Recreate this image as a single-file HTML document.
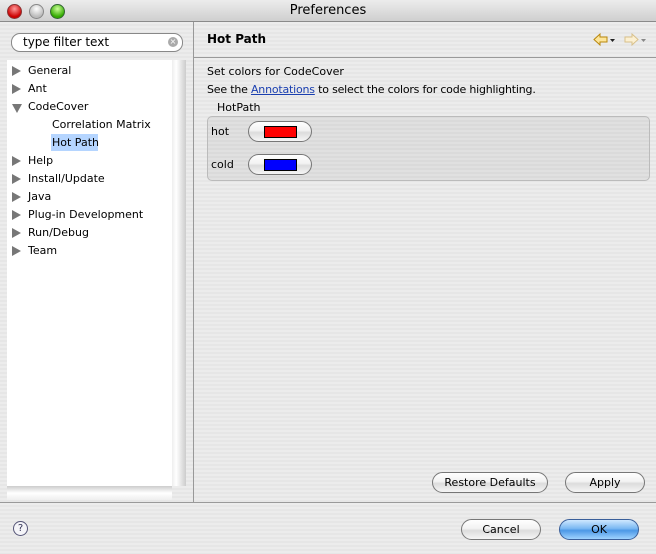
<!DOCTYPE html>
<html><head><style>
body{margin:0;width:656px;height:554px;overflow:hidden;font-family:"DejaVu Sans","Liberation Sans",sans-serif;font-size:11px;color:#000;background:#e8e8e8;position:relative}
.a{position:absolute}
.stripe{background:repeating-linear-gradient(#ececec 0 2px,#e6e6e6 2px 4px)}
.btn{position:absolute;border:1px solid #777;border-radius:11px;background:linear-gradient(#fff,#f2f2f2 45%,#dcdcdc 55%,#f6f6f6);text-align:center;line-height:19px;height:19px;font-size:11px}
.tri{position:absolute;width:0;height:0;border-top:5px solid transparent;border-bottom:5px solid transparent;border-left:9px solid #777}
.tri.d{border-left:5px solid transparent;border-right:5px solid transparent;border-top:9px solid #777;border-bottom:0}
.t{position:absolute;left:28px}
</style></head><body>
<div class="a" style="left:0;top:0;width:656px;height:21px;background:linear-gradient(#ececec,#cfcfcf);border-bottom:1px solid #8a8a8a;text-align:center;line-height:21px;font-size:13px">Preferences</div>
<div class="a" style="left:7px;top:4px;width:13px;height:13px;border-radius:50%;background:radial-gradient(circle at 50% 30%,#f99,#c00 70%);border:1px solid #833"></div>
<div class="a" style="left:29px;top:4px;width:13px;height:13px;border-radius:50%;background:radial-gradient(circle at 50% 30%,#fff,#bbb 70%);border:1px solid #888"></div>
<div class="a" style="left:50px;top:4px;width:13px;height:13px;border-radius:50%;background:radial-gradient(circle at 50% 30%,#cf9,#3a0 70%);border:1px solid #363"></div>
<div class="a stripe" style="left:0;top:22px;width:193px;height:480px"></div>
<div class="a" style="left:11px;top:33px;width:170px;height:17px;border:1px solid #888;border-radius:9px;background:#fff"></div>
<div class="a" style="left:23px;top:35px;font-size:12px">type filter text</div>
<div class="a" style="left:168px;top:37px;width:10px;height:10px;border-radius:50%;background:#aaa;color:#fff;font-size:8px;line-height:10px;text-align:center">×</div>
<div class="a" style="left:7px;top:60px;width:165px;height:426px;background:#fff"></div>
<div class="a" style="left:172px;top:60px;width:14px;height:426px;background:linear-gradient(90deg,#eee,#fff 30%,#ccc)"></div>
<div class="a" style="left:7px;top:486px;width:165px;height:14px;background:linear-gradient(#ccc,#fff 50%,#eee)"></div>
<div class="a" style="left:0;top:61px;width:186px;height:200px;font-size:11px">
<div class="tri" style="left:12px;top:5px"></div><div class="t" style="top:3px">General</div>
<div class="tri" style="left:12px;top:23px"></div><div class="t" style="top:21px">Ant</div>
<div class="tri d" style="left:12px;top:43px"></div><div class="t" style="top:39px">CodeCover</div>
<div class="t" style="left:52px;top:57px">Correlation Matrix</div>
<div class="a" style="left:51px;top:73px;width:47px;height:17px;background:#b5d5ff"></div>
<div class="t" style="left:52px;top:75px">Hot Path</div>
<div class="tri" style="left:12px;top:95px"></div><div class="t" style="top:93px">Help</div>
<div class="tri" style="left:12px;top:113px"></div><div class="t" style="top:111px">Install/Update</div>
<div class="tri" style="left:12px;top:131px"></div><div class="t" style="top:129px">Java</div>
<div class="tri" style="left:12px;top:149px"></div><div class="t" style="top:147px">Plug-in Development</div>
<div class="tri" style="left:12px;top:167px"></div><div class="t" style="top:165px">Run/Debug</div>
<div class="tri" style="left:12px;top:185px"></div><div class="t" style="top:183px">Team</div>
</div>
<div class="a" style="left:193px;top:22px;width:1px;height:480px;background:#999"></div>
<div class="a stripe" style="left:194px;top:22px;width:462px;height:480px"></div>
<div class="a" style="left:194px;top:57px;width:462px;height:1px;background:#999"></div>
<div class="a" style="left:207px;top:32px;font-weight:bold;font-size:12px">Hot Path</div>
<svg class="a" style="left:592px;top:32px" width="62" height="16"><path d="M2 7.5 L8 2 L8 5 L15 5 L15 10 L8 10 L8 13 Z" fill="#fde59a" stroke="#b8860b"/><path d="M18 7 h5 l-2.5 3z" fill="#222"/><path d="M46 7.5 L40 2 L40 5 L33 5 L33 10 L40 10 L40 13 Z" fill="#fcf0d2" stroke="#d8c08a"/><path d="M49 7 h5 l-2.5 3z" fill="#888"/></svg>
<div class="a" style="left:207px;top:65px">Set colors for CodeCover</div>
<div class="a" style="left:207px;top:83px;letter-spacing:-0.2px">See the <span style="color:#1a3fb0;text-decoration:underline">Annotations</span> to select the colors for code highlighting.</div>
<div class="a" style="left:217px;top:101px">HotPath</div>
<div class="a" style="left:207px;top:116px;width:441px;height:63px;border:1px solid #bbb;border-radius:5px;background:rgba(0,0,0,0.05)"></div>
<div class="a" style="left:211px;top:125px">hot</div>
<div class="btn" style="left:248px;top:121px;width:62px"><div style="margin:4px auto;width:31px;height:10px;background:#f00;border:1px solid #000"></div></div>
<div class="a" style="left:211px;top:158px">cold</div>
<div class="btn" style="left:248px;top:154px;width:62px"><div style="margin:4px auto;width:31px;height:10px;background:#00f;border:1px solid #000"></div></div>
<div class="btn" style="left:432px;top:472px;width:114px">Restore Defaults</div>
<div class="btn" style="left:565px;top:472px;width:78px">Apply</div>
<div class="a" style="left:0;top:502px;width:656px;height:1px;background:#999"></div>
<div class="a stripe" style="left:0;top:503px;width:656px;height:51px"></div>
<div class="a" style="left:13px;top:521px;width:13px;height:13px;border:1px solid #557;border-radius:50%;text-align:center;font-size:10px;line-height:13px;color:#335;background:#f4f4f8">?</div>
<div class="btn" style="left:461px;top:519px;width:78px">Cancel</div>
<div class="btn" style="left:559px;top:519px;width:78px;border-color:#3a5f9a;background:linear-gradient(#cfe8ff,#7ab8f2 45%,#4c98e6 55%,#9fd3ff)">OK</div>
</body></html>
